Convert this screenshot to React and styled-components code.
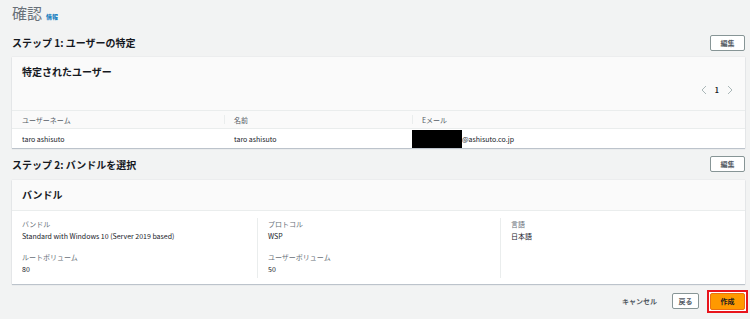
import React from "react";
import styled, { createGlobalStyle } from "styled-components";

const GlobalStyle = createGlobalStyle`
  html, body {
    margin: 0;
    padding: 0;
    background: #f2f3f3;
    font-family: "Noto Sans CJK JP", "Noto Sans", "Liberation Sans", sans-serif;
    color: #16191f;
  }
  * { box-sizing: border-box; }
`;

const Page = styled.div`
  width: 750px;
  height: 319px;
  padding: 0 5px 0 12px;
  display: flex;
  flex-direction: column;
  overflow: hidden;
`;

const TitleRow = styled.div`
  height: 30px;
  display: flex;
  align-items: baseline;
  gap: 4px;
  padding-top: 3px;
  h1 {
    margin: 0;
    font-size: 15px;
    line-height: 20px;
    font-weight: 400;
    color: #687078;
  }
`;

const InfoLink = styled.span`
  font-size: 6px;
  font-weight: 700;
  color: #0073bb;
`;

const StepRow = styled.div`
  height: ${(p) => p.$h}px;
  display: flex;
  align-items: center;
  justify-content: space-between;
  padding-bottom: ${(p) => p.$pb || 0}px;
  h2 {
    margin: 0;
    font-size: 10px;
    font-weight: 700;
    color: #16191f;
  }
`;

const Button = styled.button`
  font-family: inherit;
  font-size: 7px;
  font-weight: 700;
  color: #545b64;
  background: #fff;
  border: 1px solid #879596;
  border-radius: 2px;
  width: ${(p) => p.$w || 35}px;
  height: ${(p) => p.$h || 16}px;
  padding: 0;
  display: flex;
  align-items: center;
  justify-content: center;
`;

const PrimaryButton = styled(Button)`
  background: #ff9900;
  border-color: #ec7211;
  color: #16191f;
`;

const Highlight = styled.span`
  display: inline-flex;
  border: 2px solid #e8141c;
  padding: 1px;
  background: #fff;
`;

const Card = styled.section`
  background: #fafafa;
  box-shadow: 0 1px 1px rgba(0, 31, 63, 0.2), 0 0 1px rgba(0, 31, 63, 0.15);
`;

const CardHeader = styled.div`
  height: ${(p) => p.$h}px;
  padding: 8px 12px 0 10px;
  border-bottom: ${(p) => (p.$border ? "1px solid #eaeded" : "none")};
  h3 {
    margin: 0;
    font-size: 10px;
    line-height: 14px;
    font-weight: 700;
  }
`;

const Pager = styled.div`
  display: flex;
  justify-content: flex-end;
  align-items: center;
  gap: 8px;
  margin-top: 6px;
  font-size: 7px;
  font-weight: 700;
  color: #16191f;
  svg { display: block; }
`;

const Table = styled.div`
  display: grid;
  grid-template-columns: 212px 188px 1fr;
`;

const HeadCell = styled.div`
  height: 19px;
  display: flex;
  align-items: center;
  padding-left: 10px;
  font-size: 7px;
  font-weight: 400;
  color: #545b64;
  background: #fafafa;
  border-top: 1px solid #eaeded;
  border-bottom: 1px solid #eaeded;
  position: relative;
  &:not(:first-child)::before {
    content: "";
    position: absolute;
    left: 0;
    top: 4px;
    bottom: 4px;
    width: 1px;
    background: #eaeded;
  }
`;

const BodyCell = styled.div`
  height: 19px;
  display: flex;
  align-items: center;
  padding-left: ${(p) => p.$pl ?? 10}px;
  font-size: 7px;
  color: #16191f;
  background: #fff;
`;

const Redacted = styled.span`
  display: inline-block;
  width: 50px;
  height: 18px;
  background: #000;
`;

const DetailBody = styled.div`
  background: #fff;
  display: grid;
  grid-template-columns: 245px 243px 1fr;
  padding: 7px 0 6px 0;
  min-height: 73px;
`;

const Column = styled.div`
  padding: 0 10px;
  border-left: ${(p) => (p.$first ? "none" : "1px solid #eaeded")};
  display: flex;
  flex-direction: column;
  gap: 9px;
`;

const Field = styled.div`
  display: flex;
  flex-direction: column;
  font-size: 7px;
  line-height: 12px;
  span:first-child { color: #687078; }
  span:last-child { color: #16191f; }
`;

const Footer = styled.div`
  flex: 1;
  display: flex;
  justify-content: flex-end;
  align-items: center;
  margin-right: -3px;
  padding-bottom: 1px;
`;

const LinkText = styled.span`
  font-size: 7px;
  font-weight: 700;
  color: #545b64;
  margin-right: 15px;
`;

const Spacer = styled.span`
  width: ${(p) => p.$w}px;
`;

const Chevron = ({ dir }) => (
  <svg width="6" height="10" viewBox="0 0 6 10">
    <path
      d={dir === "left" ? "M5 1 L1 5 L5 9" : "M1 1 L5 5 L1 9"}
      fill="none"
      stroke="#aab7b8"
      strokeWidth="1"
    />
  </svg>
);

export default function App() {
  return (
    <>
      <GlobalStyle />
      <Page>
        <TitleRow>
          <h1>確認</h1>
          <InfoLink>情報</InfoLink>
        </TitleRow>

        <StepRow $h={27} $pb={2}>
          <h2>ステップ 1: ユーザーの特定</h2>
          <Button>編集</Button>
        </StepRow>

        <Card>
          <CardHeader $h={53}>
            <h3>特定されたユーザー</h3>
            <Pager>
              <Chevron dir="left" />
              <span>1</span>
              <Chevron dir="right" />
            </Pager>
          </CardHeader>
          <Table>
            <HeadCell>ユーザーネーム</HeadCell>
            <HeadCell>名前</HeadCell>
            <HeadCell>Eメール</HeadCell>
            <BodyCell>taro ashisuto</BodyCell>
            <BodyCell>taro ashisuto</BodyCell>
            <BodyCell $pl={0}>
              <Redacted />
              @ashisuto.co.jp
            </BodyCell>
          </Table>
        </Card>

        <StepRow $h={32}>
          <h2>ステップ 2: バンドルを選択</h2>
          <Button>編集</Button>
        </StepRow>

        <Card>
          <CardHeader $h={31} $border>
            <h3>バンドル</h3>
          </CardHeader>
          <DetailBody>
            <Column $first>
              <Field>
                <span>バンドル</span>
                <span>Standard with Windows 10 (Server 2019 based)</span>
              </Field>
              <Field>
                <span>ルートボリューム</span>
                <span>80</span>
              </Field>
            </Column>
            <Column>
              <Field>
                <span>プロトコル</span>
                <span>WSP</span>
              </Field>
              <Field>
                <span>ユーザーボリューム</span>
                <span>50</span>
              </Field>
            </Column>
            <Column>
              <Field>
                <span>言語</span>
                <span>日本語</span>
              </Field>
            </Column>
          </DetailBody>
        </Card>

        <Footer>
          <LinkText>キャンセル</LinkText>
          <Button $w={27} $h={16}>戻る</Button>
          <Spacer $w={8} />
          <Highlight>
            <PrimaryButton $w={35} $h={17}>作成</PrimaryButton>
          </Highlight>
        </Footer>
      </Page>
    </>
  );
}
